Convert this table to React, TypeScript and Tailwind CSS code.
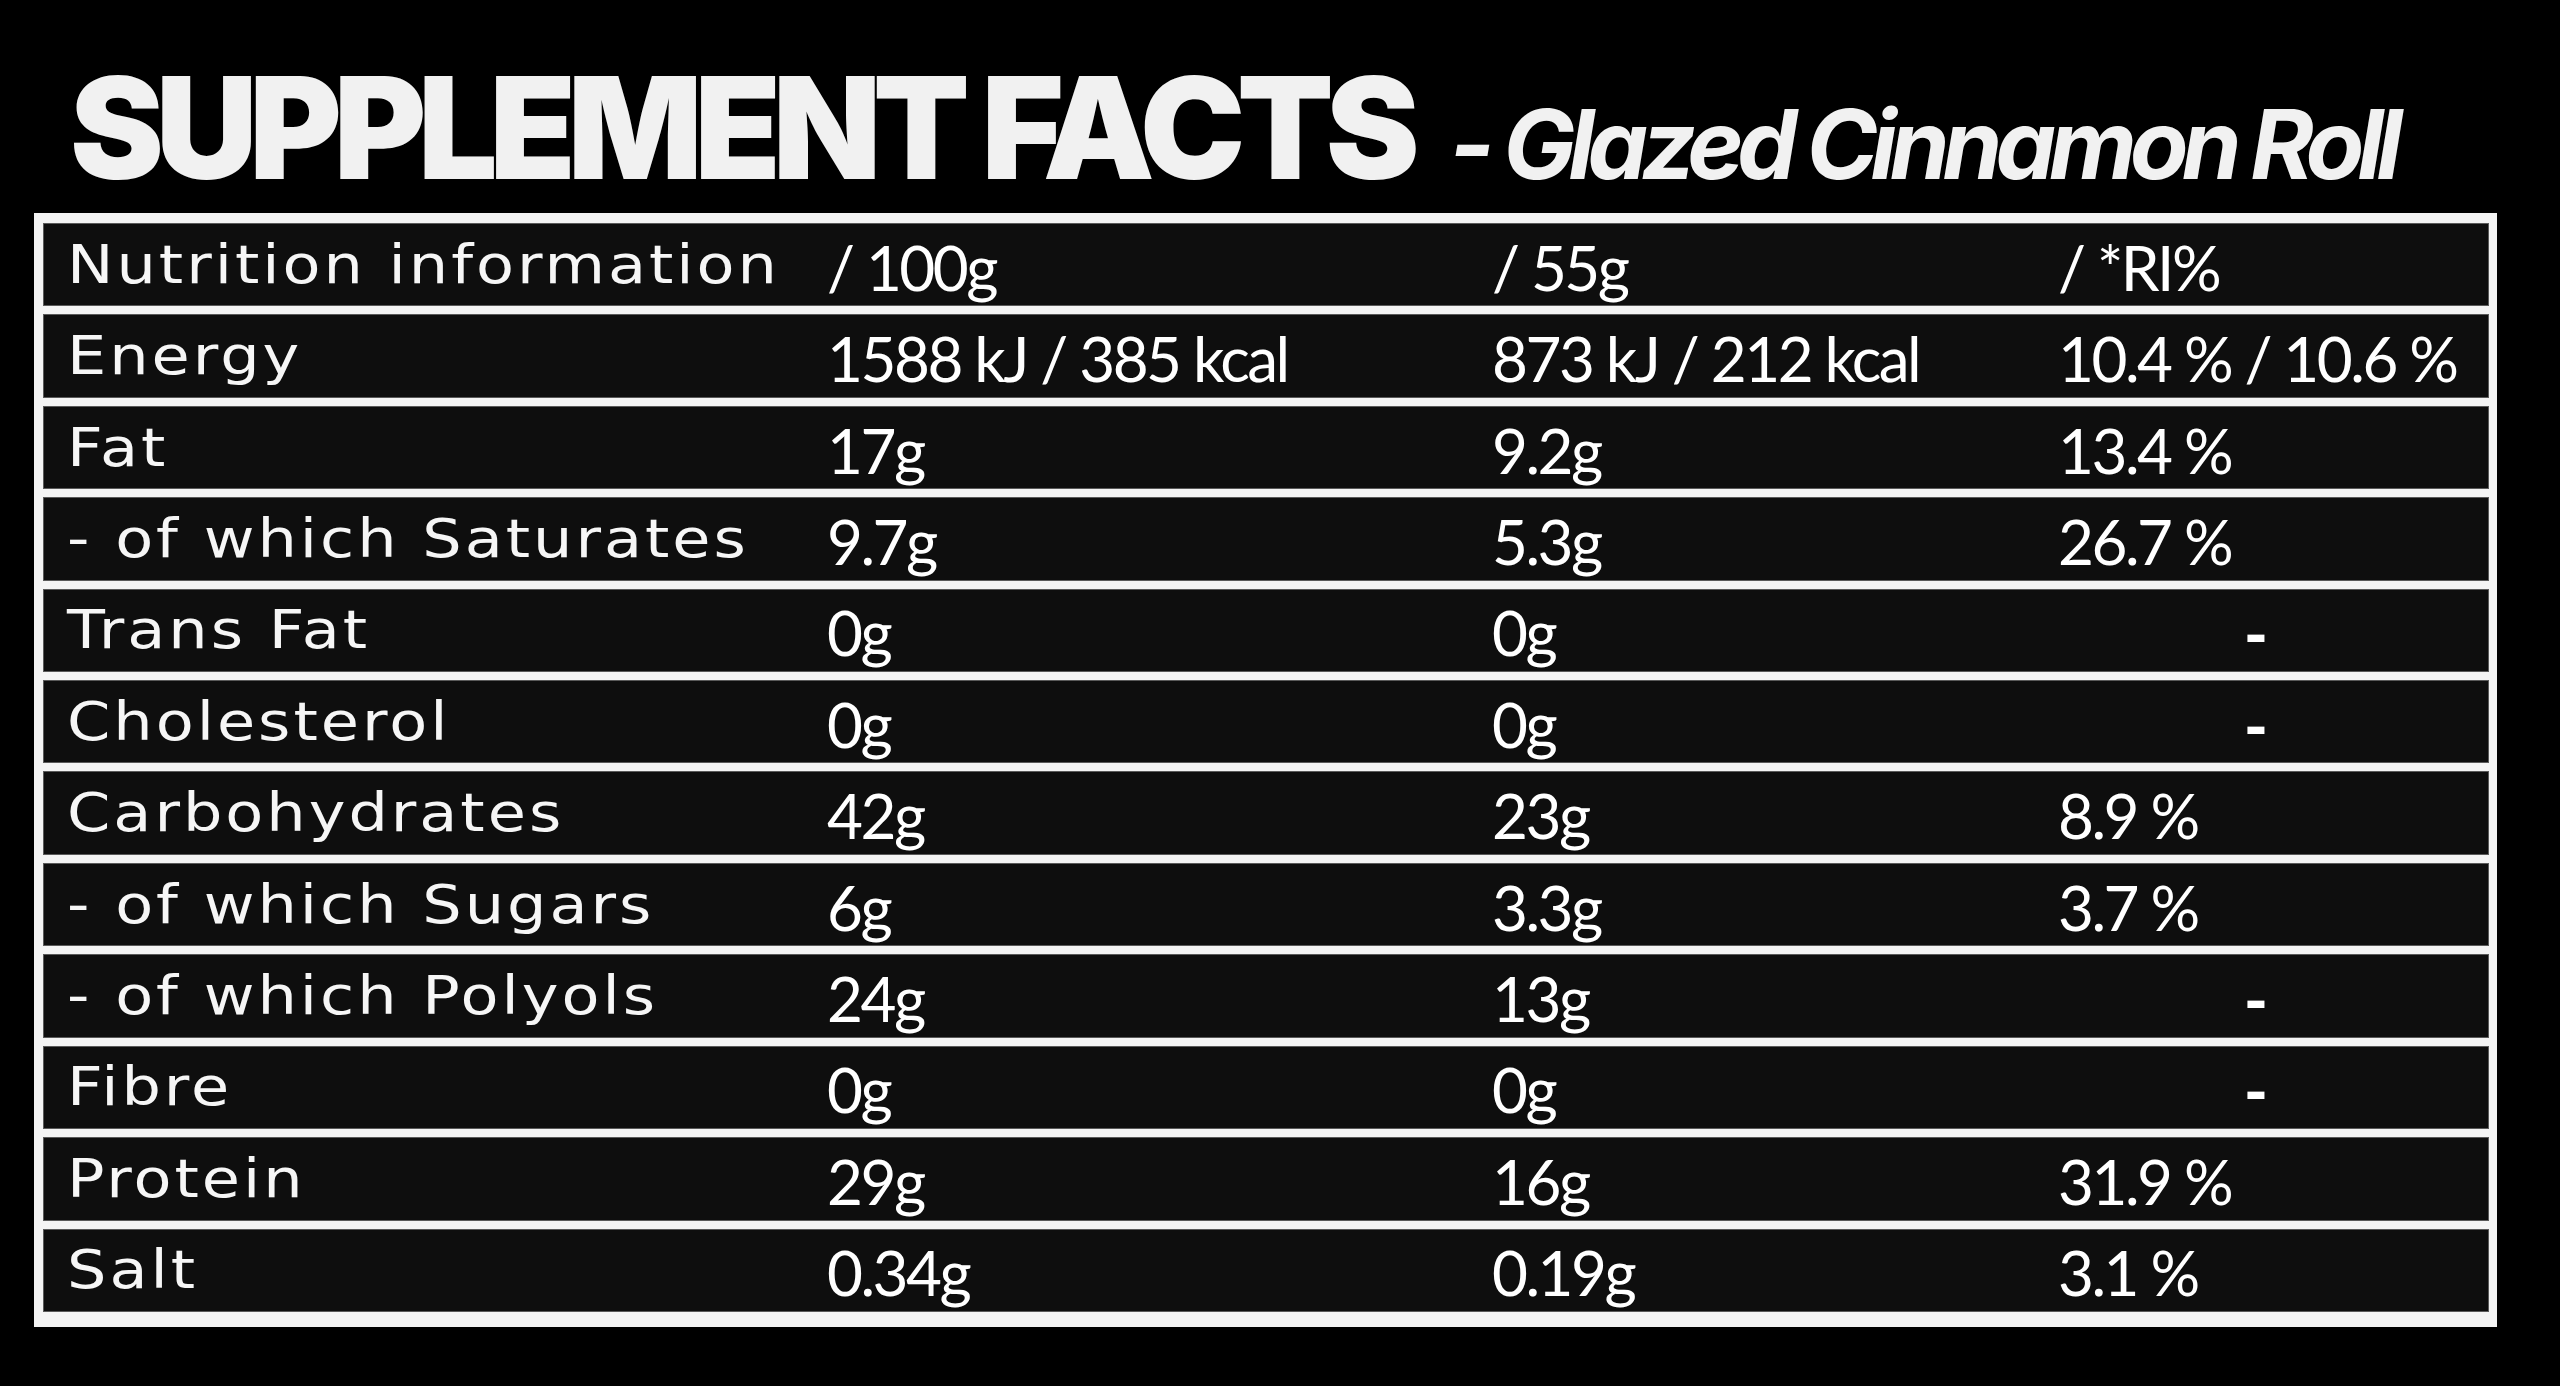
const rows = [
  ['Nutrition information', '/ 100g', '/ 55g', '/ *RI%'],
  ['Energy', '1588 kJ / 385 kcal', '873 kJ / 212 kcal', '10.4 % / 10.6 %'],
  ['Fat', '17g', '9.2g', '13.4 %'],
  ['- of which Saturates', '9.7g', '5.3g', '26.7 %'],
  ['Trans Fat', '0g', '0g', '-'],
  ['Cholesterol', '0g', '0g', '-'],
  ['Carbohydrates', '42g', '23g', '8.9 %'],
  ['- of which Sugars', '6g', '3.3g', '3.7 %'],
  ['- of which Polyols', '24g', '13g', '-'],
  ['Fibre', '0g', '0g', '-'],
  ['Protein', '29g', '16g', '31.9 %'],
  ['Salt', '0.34g', '0.19g', '3.1 %'],
]

const Row = ({ cells }: { cells: string[] }) => {
  const [label, per100, perServing, ri] = cells
  return (
    <div className="grid grid-cols-[783px_665px_566px_1fr] items-center bg-[#0e0e0e] border border-[#5a5a5a]">
      <div className="pl-[23px]">
        <span className="inline-block origin-left scale-x-[1.15] whitespace-nowrap font-['DejaVu_Sans',sans-serif] text-[54px] leading-none tracking-[2.6px] text-[#f6f6f6]">
          {label}
        </span>
      </div>
      <span className="font-['Lato',sans-serif] text-[62px] leading-none tracking-[-2.5px] text-white pt-[4px]">
        {per100}
      </span>
      <span className="font-['Lato',sans-serif] text-[62px] leading-none tracking-[-2.5px] text-white pt-[4px]">
        {perServing}
      </span>
      {ri === '-' ? (
        <span className="pl-[186px] font-['Lato',sans-serif] font-black text-[64px] leading-none text-white pt-[8px]">
          -
        </span>
      ) : (
        <span className="font-['Lato',sans-serif] text-[62px] leading-none tracking-[-2.5px] text-white pt-[4px]">
          {ri}
        </span>
      )}
    </div>
  )
}

export default function App() {
  return (
    <div className="w-[2560px] h-[1386px] bg-black overflow-hidden">
      <div className="h-[213px] pt-[57px] pl-[70px] flex items-baseline gap-[38px] text-[#f1f1f1]">
        <h1 className="font-['Inter',sans-serif] font-black text-[141px] leading-none tracking-[-0.058em]">
          SUPPLEMENT FACTS
        </h1>
        <h2 className="font-['Inter',sans-serif] font-bold italic text-[96px] leading-none tracking-[-0.072em]">
          - Glazed Cinnamon Roll
        </h2>
      </div>

      <div className="ml-[34px] w-[2463px] bg-[#f4f4f4] pt-[10px] pb-[15px] pl-[9px] pr-[8px]">
        <div className="grid grid-rows-12 gap-[8px] h-[1089px]">
          {rows.map((cells) => (
            <Row key={cells[0]} cells={cells} />
          ))}
        </div>
      </div>
    </div>
  )
}
